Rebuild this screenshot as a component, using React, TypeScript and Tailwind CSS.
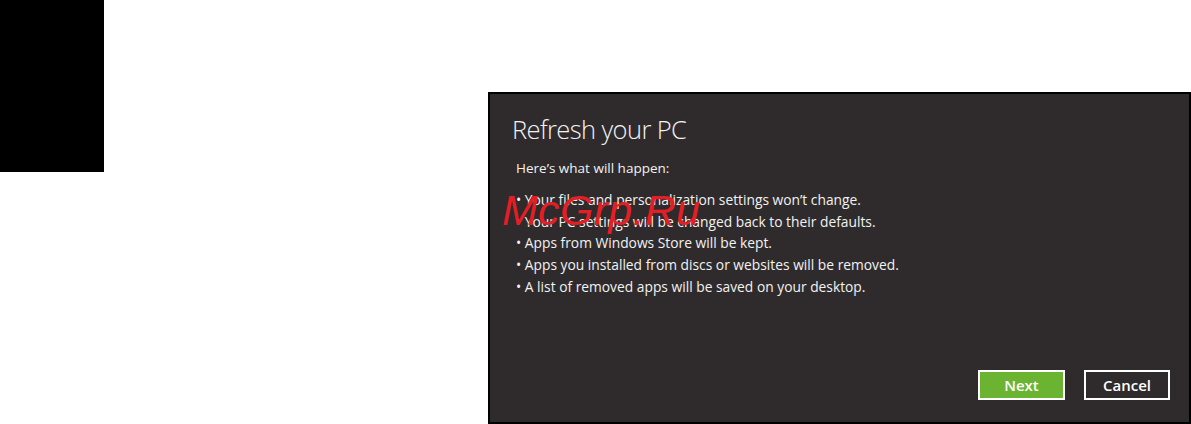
export default function App() {
  const items = [
    "Your files and personalization settings won\u2019t change.",
    "Your PC settings will be changed back to their defaults.",
    "Apps from Windows Store will be kept.",
    "Apps you installed from discs or websites will be removed.",
    "A list of removed apps will be saved on your desktop.",
  ];

  return (
    <div className="relative w-[1191px] h-[424px] bg-white flex items-start overflow-hidden font-['Open_Sans',sans-serif]">
      <div className="w-[104px] h-[172px] bg-black shrink-0" />

      <div className="ml-[384px] mt-[92px] w-[703px] h-[332px] border-2 border-black bg-[#2f2b2c] flex flex-col text-[#f2f2f2]">
        <div className="pl-[22px] pt-[19px]">
          <h1 className="text-[25.5px] leading-[32px] font-light tracking-[-0.6px]">Refresh your PC</h1>
          <p className="mt-[14px] pl-[4px] text-[13.5px] leading-[18px]">Here&rsquo;s what will happen:</p>
          <ul className="mt-[12px] pl-[4px] text-[13.8px] leading-[21.7px]">
            {items.map((t) => (
              <li key={t}>&bull; {t}</li>
            ))}
          </ul>
        </div>

        <div className="flex-1" />

        <div className="flex justify-end gap-[19px] pr-[19px] pb-[22px]">
          <button className="w-[87px] h-[30px] border-2 border-white bg-[#6bb431] text-white text-[15px] font-semibold">
            Next
          </button>
          <button className="w-[86px] h-[30px] border-2 border-white bg-[#2f2b2c] text-white text-[15px] font-semibold">
            Cancel
          </button>
        </div>
      </div>

      <div className="absolute left-[502px] top-[185px] text-[43px] leading-[50px] italic text-[#e31e24] tracking-[0.3px] font-['Liberation_Sans',Arial,sans-serif]">
        McGrp.Ru
      </div>
    </div>
  );
}
